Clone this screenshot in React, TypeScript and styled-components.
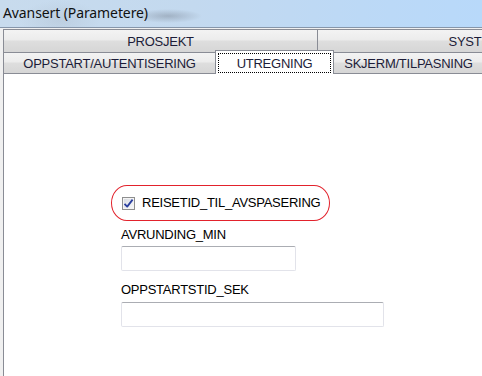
import styled, { createGlobalStyle } from 'styled-components';

const GlobalStyle = createGlobalStyle`
  html, body {
    margin: 0;
    padding: 0;
    background: #ffffff;
  }
  * {
    box-sizing: border-box;
  }
`;

const Window = styled.div`
  width: 482px;
  height: 376px;
  overflow: hidden;
  display: flex;
  flex-direction: column;
  font-family: 'Liberation Sans', Arial, sans-serif;
`;

const TitleBar = styled.div`
  height: 28px;
  flex-shrink: 0;
  display: flex;
  align-items: center;
  padding: 0 0 2px 3px;
  border-bottom: 1px solid #8696aa;
  background:
    radial-gradient(ellipse 34px 7px at 168px 16px, rgba(120, 130, 145, 0.45), rgba(120, 130, 145, 0) 100%),
    radial-gradient(ellipse 40px 20px at 60px 20px, rgba(170, 185, 200, 0.35), rgba(170, 185, 200, 0) 100%),
    linear-gradient(90deg, #c8dbed 0%, #c3d9ef 40%, #bcd9f6 75%, #b8d9fa 100%);
`;

const Title = styled.span`
  font-family: 'Noto Sans', 'Open Sans', sans-serif;
  font-size: 14px;
  color: #111111;
  letter-spacing: -0.1px;
`;

const Frame = styled.div`
  flex: 1;
  display: flex;
  background: #f0f0f0;
  padding: 1px 0 0 3px;
`;

const TabControl = styled.div`
  flex: 1;
  display: flex;
  flex-direction: column;
  border-left: 1px solid #898c95;
  min-width: 0;
`;

const TabRow = styled.div<{ $height: number }>`
  display: flex;
  align-items: flex-start;
  height: ${(p) => p.$height}px;
  flex-shrink: 0;
`;

const Tab = styled.div<{ $width: number; $height: number }>`
  width: ${(p) => p.$width}px;
  height: ${(p) => p.$height}px;
  flex-shrink: 0;
  display: flex;
  align-items: center;
  justify-content: center;
  padding-top: 1px;
  border-top: 1px solid #898c95;
  border-right: 1px solid #898c95;
  background: linear-gradient(180deg, #f3f3f3 0%, #ececec 45%, #dedede 50%, #d6d6d6 100%);
  font-size: 13px;
  letter-spacing: -0.25px;
  color: #1c1c38;
  white-space: nowrap;
`;

const ActiveTab = styled.div<{ $width: number }>`
  position: relative;
  z-index: 1;
  width: ${(p) => p.$width}px;
  height: 24px;
  margin: -2px 0 0 -1px;
  flex-shrink: 0;
  padding: 2px 2px 1px 2px;
  border: 1px solid #898c95;
  border-bottom: none;
  background: #ffffff;
  font-size: 13px;
  letter-spacing: -0.25px;
  color: #1c1c38;
  white-space: nowrap;
`;

const FocusRect = styled.div`
  height: 100%;
  display: flex;
  align-items: center;
  justify-content: center;
  border: 1px dotted #000000;
`;

const Panel = styled.div`
  flex: 1;
  background: #ffffff;
  border-top: 1px solid #898c95;
  display: flex;
  flex-direction: column;
  align-items: flex-start;
  padding: 111px 0 0 117px;
`;

const Highlight = styled.div`
  display: flex;
  align-items: center;
  gap: 7px;
  height: 36px;
  margin-left: -10px;
  padding: 0 9px 0 10px;
  border: 1px solid #e2222c;
  border-radius: 16px / 18px;
`;

const CheckBox = styled.span`
  width: 13px;
  height: 13px;
  flex-shrink: 0;
  display: flex;
  align-items: center;
  justify-content: center;
  border: 1px solid #8e8f8f;
  background: linear-gradient(135deg, #d5d8de 0%, #eceef2 60%, #f8f9fb 100%);
  box-shadow: inset 0 0 0 1px #f4f4f4;
`;

const Label = styled.span<{ $top?: number }>`
  display: block;
  margin-top: ${(p) => p.$top ?? 0}px;
  font-size: 13px;
  line-height: 16px;
  letter-spacing: -0.25px;
  color: #000000;
  white-space: nowrap;
`;

const TextBox = styled.div<{ $width: number; $top: number }>`
  width: ${(p) => p.$width}px;
  height: 25px;
  margin-top: ${(p) => p.$top}px;
  border: 1px solid #e2e3ea;
  border-top-color: #abadb3;
  border-radius: 2px;
  background: #ffffff;
`;

export default function App() {
  return (
    <Window>
      <GlobalStyle />
      <TitleBar>
        <Title>Avansert (Parametere)</Title>
      </TitleBar>
      <Frame>
        <TabControl>
          <TabRow $height={23}>
            <Tab $width={314} $height={23}>PROSJEKT</Tab>
            <Tab $width={314} $height={23}>SYSTEM</Tab>
          </TabRow>
          <TabRow $height={21}>
            <Tab $width={212} $height={21}>OPPSTART/AUTENTISERING</Tab>
            <ActiveTab $width={119}>
              <FocusRect>UTREGNING</FocusRect>
            </ActiveTab>
            <Tab $width={150} $height={21}>SKJERM/TILPASNING</Tab>
          </TabRow>
          <Panel>
            <Highlight>
              <CheckBox>
                <svg width="11" height="11" viewBox="0 0 11 11">
                  <path d="M1.5 5.8 L4.2 8.6 L9.6 1.6" fill="none" stroke="#2a3f9e" strokeWidth="1.8" strokeLinejoin="round" />
                </svg>
              </CheckBox>
              <Label>REISETID_TIL_AVSPASERING</Label>
            </Highlight>
            <Label $top={6}>AVRUNDING_MIN</Label>
            <TextBox $width={175} $top={3} />
            <Label $top={11}>OPPSTARTSTID_SEK</Label>
            <TextBox $width={263} $top={4} />
          </Panel>
        </TabControl>
      </Frame>
    </Window>
  );
}
